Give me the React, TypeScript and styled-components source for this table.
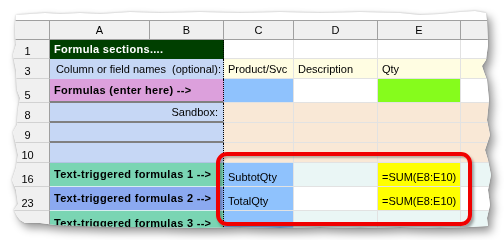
import React from "react";
import styled, { createGlobalStyle } from "styled-components";

const GlobalStyle = createGlobalStyle`
    html, body {
        margin: 0;
        padding: 0;
        background: #ffffff;
    }
    body {
        font-family: "Liberation Sans", Arial, sans-serif;
        font-size: 11px;
        color: #000000;
    }
`;

// torn paper outline, in px relative to the paper box (which sits at 10,8)
const tornEdge = [
    [16, 15], [30, 14], [45, 13], [60, 14], [80, 13], [100, 14], [130, 12], [160, 13], [200, 12],
    [240, 13], [280, 12], [320, 13], [360, 12], [400, 13], [420, 15], [440, 14], [460, 12],
    [475, 11], [486, 13],
    [487, 20], [488, 45], [486, 60], [482, 66], [484, 72], [487, 80], [489, 100], [487, 120],
    [490, 135], [485, 150], [488, 160], [491, 175], [488, 190], [490, 205], [487, 218], [488, 226],
    [470, 227], [440, 228], [400, 227], [360, 228], [320, 227], [280, 228], [240, 227], [200, 228],
    [160, 227], [120, 227], [80, 226], [55, 225], [40, 223], [25, 223],
    [20, 220], [17, 216], [14, 210], [18, 204], [16, 190], [12, 180], [16, 168], [18, 155],
    [16, 145], [13, 132], [17, 125], [18, 110], [20, 98], [17, 90], [16, 70], [13, 55], [16, 45],
    [15, 30],
]
    .map(([x, y]) => `${x - 10}px ${y - 8}px`)
    .join(", ");

const colors = {
    green: "#003f00",
    lightBlue: "#c6d7f5",
    plum: "#dca0dc",
    yellowish: "#fffde2",
    peach: "#f9e8d6",
    blue: "#8fc2fd",
    lime: "#86fc1c",
    aqua: "#7ad5b3",
    cornflower: "#8ba9f0",
    cyan: "#eaf6f5",
    yellow: "#ffff00",
};

interface IDataCell {
    bg: string;
    text?: string;
}

interface IRow {
    n: string;
    label: string;
    labelBg: string;
    labelColor?: string;
    bold?: boolean;
    right?: boolean;
    line: string;
    cells: IDataCell[];
}

const rows: IRow[] = [
    {
        n: "1",
        label: "Formula sections....",
        labelBg: colors.green,
        labelColor: "#ffffff",
        bold: true,
        line: "none",
        cells: [{ bg: "#fff" }, { bg: "#fff" }, { bg: "#fff" }, { bg: "#fff" }],
    },
    {
        n: "3",
        label: "Column or field names  (optional):",
        labelBg: colors.lightBlue,
        right: true,
        line: "none",
        cells: [
            { bg: colors.yellowish, text: "Product/Svc" },
            { bg: colors.yellowish, text: "Description" },
            { bg: colors.yellowish, text: "Qty" },
            { bg: colors.yellowish },
        ],
    },
    {
        n: "5",
        label: "Formulas (enter here) -->",
        labelBg: colors.plum,
        bold: true,
        line: "2px solid #808080",
        cells: [{ bg: colors.blue }, { bg: "#fff" }, { bg: colors.lime }, { bg: "#fff" }],
    },
    {
        n: "8",
        label: "Sandbox:\u00a0",
        labelBg: colors.lightBlue,
        right: true,
        line: "2px solid #808080",
        cells: [{ bg: colors.peach }, { bg: colors.peach }, { bg: colors.peach }, { bg: colors.peach }],
    },
    {
        n: "9",
        label: "",
        labelBg: colors.lightBlue,
        line: "2px solid #808080",
        cells: [{ bg: colors.peach }, { bg: colors.peach }, { bg: colors.peach }, { bg: colors.peach }],
    },
    {
        n: "10",
        label: "",
        labelBg: colors.lightBlue,
        line: "1px solid #b4c4e4",
        cells: [{ bg: colors.peach }, { bg: colors.peach }, { bg: colors.peach }, { bg: colors.peach }],
    },
    {
        n: "16",
        label: "Text-triggered formulas 1 -->",
        labelBg: colors.aqua,
        bold: true,
        line: "1px solid #d6eef0",
        cells: [
            { bg: colors.blue, text: "SubtotQty" },
            { bg: colors.cyan },
            { bg: colors.yellow, text: "=SUM(E8:E10)" },
            { bg: colors.cyan },
        ],
    },
    {
        n: "23",
        label: "Text-triggered formulas 2 -->",
        labelBg: colors.cornflower,
        bold: true,
        line: "1px solid #d6eef0",
        cells: [
            { bg: colors.blue, text: "TotalQty" },
            { bg: "#fff" },
            { bg: colors.yellow, text: "=SUM(E8:E10)" },
            { bg: "#fff" },
        ],
    },
    {
        n: "26",
        label: "Text-triggered formulas 3 -->",
        labelBg: colors.aqua,
        bold: true,
        line: "none",
        cells: [{ bg: colors.blue }, { bg: colors.cyan }, { bg: colors.cyan }, { bg: colors.cyan }],
    },
];

const columns = ["A", "B", "C", "D", "E", ""];

const App = () => {
    return (
        <>
            <GlobalStyle />
            <Stage>
                <Shadow>
                    <Paper>
                        <Sheet>
                            <Corner />
                            {columns.map((c, i) => (
                                <ColHeader key={i}>{c}</ColHeader>
                            ))}
                            {rows.map((row) => (
                                <React.Fragment key={row.n}>
                                    <RowHeader>{row.n}</RowHeader>
                                    <LabelCell
                                        $bg={row.labelBg}
                                        $color={row.labelColor}
                                        $bold={row.bold}
                                        $right={row.right}
                                        $line={row.line}
                                    >
                                        {row.label}
                                    </LabelCell>
                                    {row.cells.map((cell, i) => (
                                        <DataCell key={i} $bg={cell.bg}>
                                            {cell.text}
                                        </DataCell>
                                    ))}
                                </React.Fragment>
                            ))}
                        </Sheet>
                        <Highlight />
                    </Paper>
                </Shadow>
            </Stage>
        </>
    );
};

export default App;

const Stage = styled.div`
    width: 504px;
    height: 240px;
    padding: 8px 0 0 10px;
    box-sizing: border-box;
    overflow: hidden;
`;

const Shadow = styled.div`
    width: 484px;
    height: 224px;
    filter: drop-shadow(0 0 1px rgba(0, 0, 0, 0.25)) drop-shadow(4px 5px 4px rgba(0, 0, 0, 0.4));
`;

const Paper = styled.div`
    position: relative;
    width: 484px;
    height: 224px;
    padding-top: 12px;
    box-sizing: border-box;
    background: #ffffff;
    overflow: hidden;
    clip-path: polygon(${tornEdge});
`;

const Sheet = styled.div`
    display: grid;
    grid-template-columns: 40px 174px 70px 84px 83px 33px;
    grid-template-rows: 20px 19px 20px 24px 20px 20px 20px 24px 24px 24px;
`;

const HeaderBase = styled.div`
    box-sizing: border-box;
    background: #f0f0f0;
    border-right: 1px solid #a0a0a0;
    display: flex;
    font-size: 11px;
    color: #000000;
`;

const Corner = styled(HeaderBase)`
    border-top: 1px solid #a0a0a0;
    border-bottom: 1px solid #a0a0a0;
`;

const ColHeaderGrid = styled(HeaderBase)`
    border-top: 1px solid #a0a0a0;
    border-bottom: 1px solid #a0a0a0;
    align-items: center;
    justify-content: center;
`;

// column A and B share the merged label column, so the header is split in two
const ColHeaderPair = styled.div`
    display: grid;
    grid-template-columns: 100px 74px;
`;

const ColHeader = ({ children }: { children: React.ReactNode }) => {
    if (children === "A") {
        return (
            <ColHeaderPair>
                <ColHeaderGrid>A</ColHeaderGrid>
                <ColHeaderGrid>B</ColHeaderGrid>
            </ColHeaderPair>
        );
    }
    if (children === "B") return null;
    return <ColHeaderGrid>{children}</ColHeaderGrid>;
};

const RowHeader = styled(HeaderBase)`
    border-bottom: 1px solid #d2d2d2;
    align-items: flex-end;
    justify-content: center;
    padding: 0 4px 1px 0;
`;

const LabelCell = styled.div<{ $bg: string; $color?: string; $bold?: boolean; $right?: boolean; $line: string }>`
    box-sizing: border-box;
    display: flex;
    align-items: center;
    justify-content: ${(p) => (p.$right ? "flex-end" : "flex-start")};
    padding: 0 2px 1px 4px;
    background: ${(p) => p.$bg};
    color: ${(p) => p.$color ?? "#000000"};
    font-weight: ${(p) => (p.$bold ? "bold" : "normal")};
    letter-spacing: ${(p) => (p.$bold ? "0.3px" : "0")};
    font-size: 11px;
    white-space: pre;
    overflow: hidden;
    border-right: 1px dotted #000000;
    border-bottom: ${(p) => p.$line};
`;

const DataCell = styled.div<{ $bg: string }>`
    box-sizing: border-box;
    display: flex;
    align-items: flex-end;
    padding: 0 2px 3px 4px;
    background: ${(p) => p.$bg};
    border-right: 1px solid #e2e2e2;
    border-bottom: 1px solid #e2e2e2;
    font-size: 11px;
    white-space: nowrap;
    overflow: hidden;
`;

const Highlight = styled.div`
    position: absolute;
    left: 206px;
    top: 144px;
    width: 256px;
    height: 74px;
    box-sizing: border-box;
    border: 4px solid #f00000;
    border-radius: 11px;
    box-shadow: 2px 3px 3px rgba(0, 0, 0, 0.35), inset 2px 2px 2px rgba(0, 0, 0, 0.25);
`;
